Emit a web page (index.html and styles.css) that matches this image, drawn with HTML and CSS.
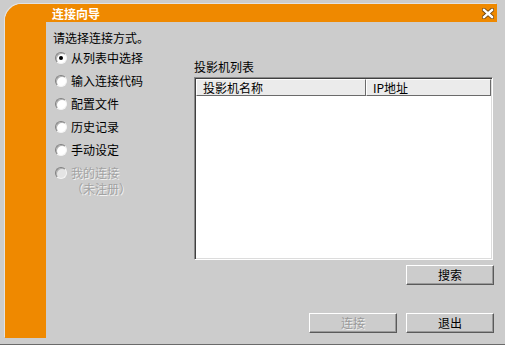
FILE: index.html
```html
<!DOCTYPE html>
<html lang="zh-CN">
<head>
<meta charset="utf-8">
<title>连接向导</title>
<link rel="stylesheet" href="styles.css">
</head>
<body>
<div class="window">
  <div class="frame">
    <div class="side"></div>
    <div class="titlebar">
      <span class="title">连接向导</span>
      <span class="close">
        <svg width="12" height="11" viewBox="0 0 12 11">
          <path d="M2 2 L10 9 M10 2 L2 9" stroke="#6b4312" stroke-width="4.2" stroke-linecap="square" fill="none"/>
          <path d="M2 2 L10 9 M10 2 L2 9" stroke="#ffffff" stroke-width="2.4" stroke-linecap="square" fill="none"/>
        </svg>
      </span>
    </div>
    <div class="content">
      <div class="left">
        <div class="prompt">请选择连接方式。</div>
        <ul class="options">
          <li class="opt checked"><span class="radio"></span><span class="label">从列表中选择</span></li>
          <li class="opt"><span class="radio"></span><span class="label">输入连接代码</span></li>
          <li class="opt"><span class="radio"></span><span class="label">配置文件</span></li>
          <li class="opt"><span class="radio"></span><span class="label">历史记录</span></li>
          <li class="opt"><span class="radio"></span><span class="label">手动设定</span></li>
          <li class="opt disabled"><span class="radio"></span><span class="label">我的连接<br>（未注册）</span></li>
        </ul>
      </div>
      <div class="right">
        <div class="list-label">投影机列表</div>
        <div class="listbox">
          <div class="list-head">
            <div class="col col-name">投影机名称</div>
            <div class="col col-ip">IP地址</div>
          </div>
        </div>
        <div class="search-row">
          <button class="btn">搜索</button>
        </div>
        <div class="footer">
          <button class="btn btn-disabled" disabled>连接</button>
          <button class="btn">退出</button>
        </div>
      </div>
    </div>
  </div>
</div>
</body>
</html>
```

FILE: styles.css
```css
* { box-sizing: border-box; }

html, body {
  margin: 0;
  padding: 0;
  background: #cccccc;
}

body {
  font-family: "Noto Sans CJK SC", "Noto Sans", sans-serif;
  font-size: 12px;
  color: #000;
}

.window {
  width: 505px;
  height: 345px;
  padding: 4px 8px 0 5px;
  background: #cccccc;
  border-bottom: 1px solid #6a6a6a;
}

.frame {
  display: grid;
  grid-template-columns: 41px 451px;
  grid-template-rows: 18px 316px;
  background: #ef8900;
  border-top-left-radius: 17px;
  overflow: hidden;
  box-shadow: -1px -1px 0 #e2e2e2;
}

.side {
  grid-column: 1;
  grid-row: 1 / 3;
  background: #ef8900;
}

.titlebar {
  grid-column: 2;
  grid-row: 1;
  display: flex;
  align-items: center;
  justify-content: space-between;
  padding: 0 3px 0 6px;
  background: #ef8900;
}

.title {
  color: #ffffff;
  font-weight: bold;
  font-size: 12px;
  line-height: 14px;
  padding-top: 1px;
}

.close {
  display: flex;
  width: 12px;
  height: 11px;
  margin-top: 1px;
}

.content {
  grid-column: 2;
  grid-row: 2;
  background: #cccccc;
  display: flex;
}

.left {
  width: 148px;
  padding-left: 7px;
}

.prompt {
  line-height: 14px;
  padding-top: 9px;
}

.options {
  list-style: none;
  margin: 1px 0 0 0;
  padding: 0;
}

.opt {
  display: flex;
  align-items: center;
  height: 23px;
  line-height: 14px;
}

.radio {
  width: 12px;
  height: 12px;
  margin-left: 2px;
  margin-right: 4px;
  border-radius: 50%;
  background: #ffffff;
  border: 1px solid;
  border-color: #808080 #f4f4f4 #f4f4f4 #808080;
  box-shadow: inset 1px 1px 0 #b0b0b0;
  display: flex;
  align-items: center;
  justify-content: center;
  flex: none;
}

.checked .radio::after {
  content: "";
  width: 4px;
  height: 4px;
  border-radius: 50%;
  background: #000;
}

.disabled {
  align-items: flex-start;
  height: auto;
  padding-top: 4px;
}

.disabled .radio {
  margin-top: 2px;
  background: #e4e4e4;
}

.disabled .label {
  line-height: 16px;
  color: #a2a2a2;
  text-shadow: 1px 1px 0 #f2f2f2;
}

.right {
  width: 300px;
  display: flex;
  flex-direction: column;
}

.list-label {
  margin-top: 38px;
  line-height: 14px;
}

.listbox {
  margin-top: 3px;
  width: 299px;
  height: 183px;
  background: #ffffff;
  border: 1px solid;
  border-color: #8a8a8a #ffffff #ffffff #8a8a8a;
  box-shadow: inset 1px 1px 0 #404040, inset -1px -1px 0 #dcdcdc;
  padding: 1px;
}

.list-head {
  display: flex;
  height: 17px;
}

.col {
  background: #ebebeb;
  border: 1px solid;
  border-color: #ffffff #6a6a6a #6a6a6a #ffffff;
  line-height: 15px;
  padding-left: 6px;
}

.col-name { width: 170px; }
.col-ip { flex: 1; }

.search-row {
  display: flex;
  justify-content: flex-end;
  margin-top: 5px;
}

.footer {
  display: flex;
  justify-content: flex-end;
  gap: 9px;
  margin-top: 28px;
}

.btn {
  width: 88px;
  height: 20px;
  padding: 0;
  font-family: "Noto Sans CJK SC", "Noto Sans", sans-serif;
  font-size: 12px;
  line-height: 16px;
  color: #000;
  background: #cccccc;
  border: 1px solid;
  border-color: #ffffff #5a5a5a #5a5a5a #ffffff;
  box-shadow: inset -1px -1px 0 #9a9a9a;
}

.btn-disabled {
  color: #9a9a9a;
  text-shadow: 1px 1px 0 #f0f0f0;
}
```
